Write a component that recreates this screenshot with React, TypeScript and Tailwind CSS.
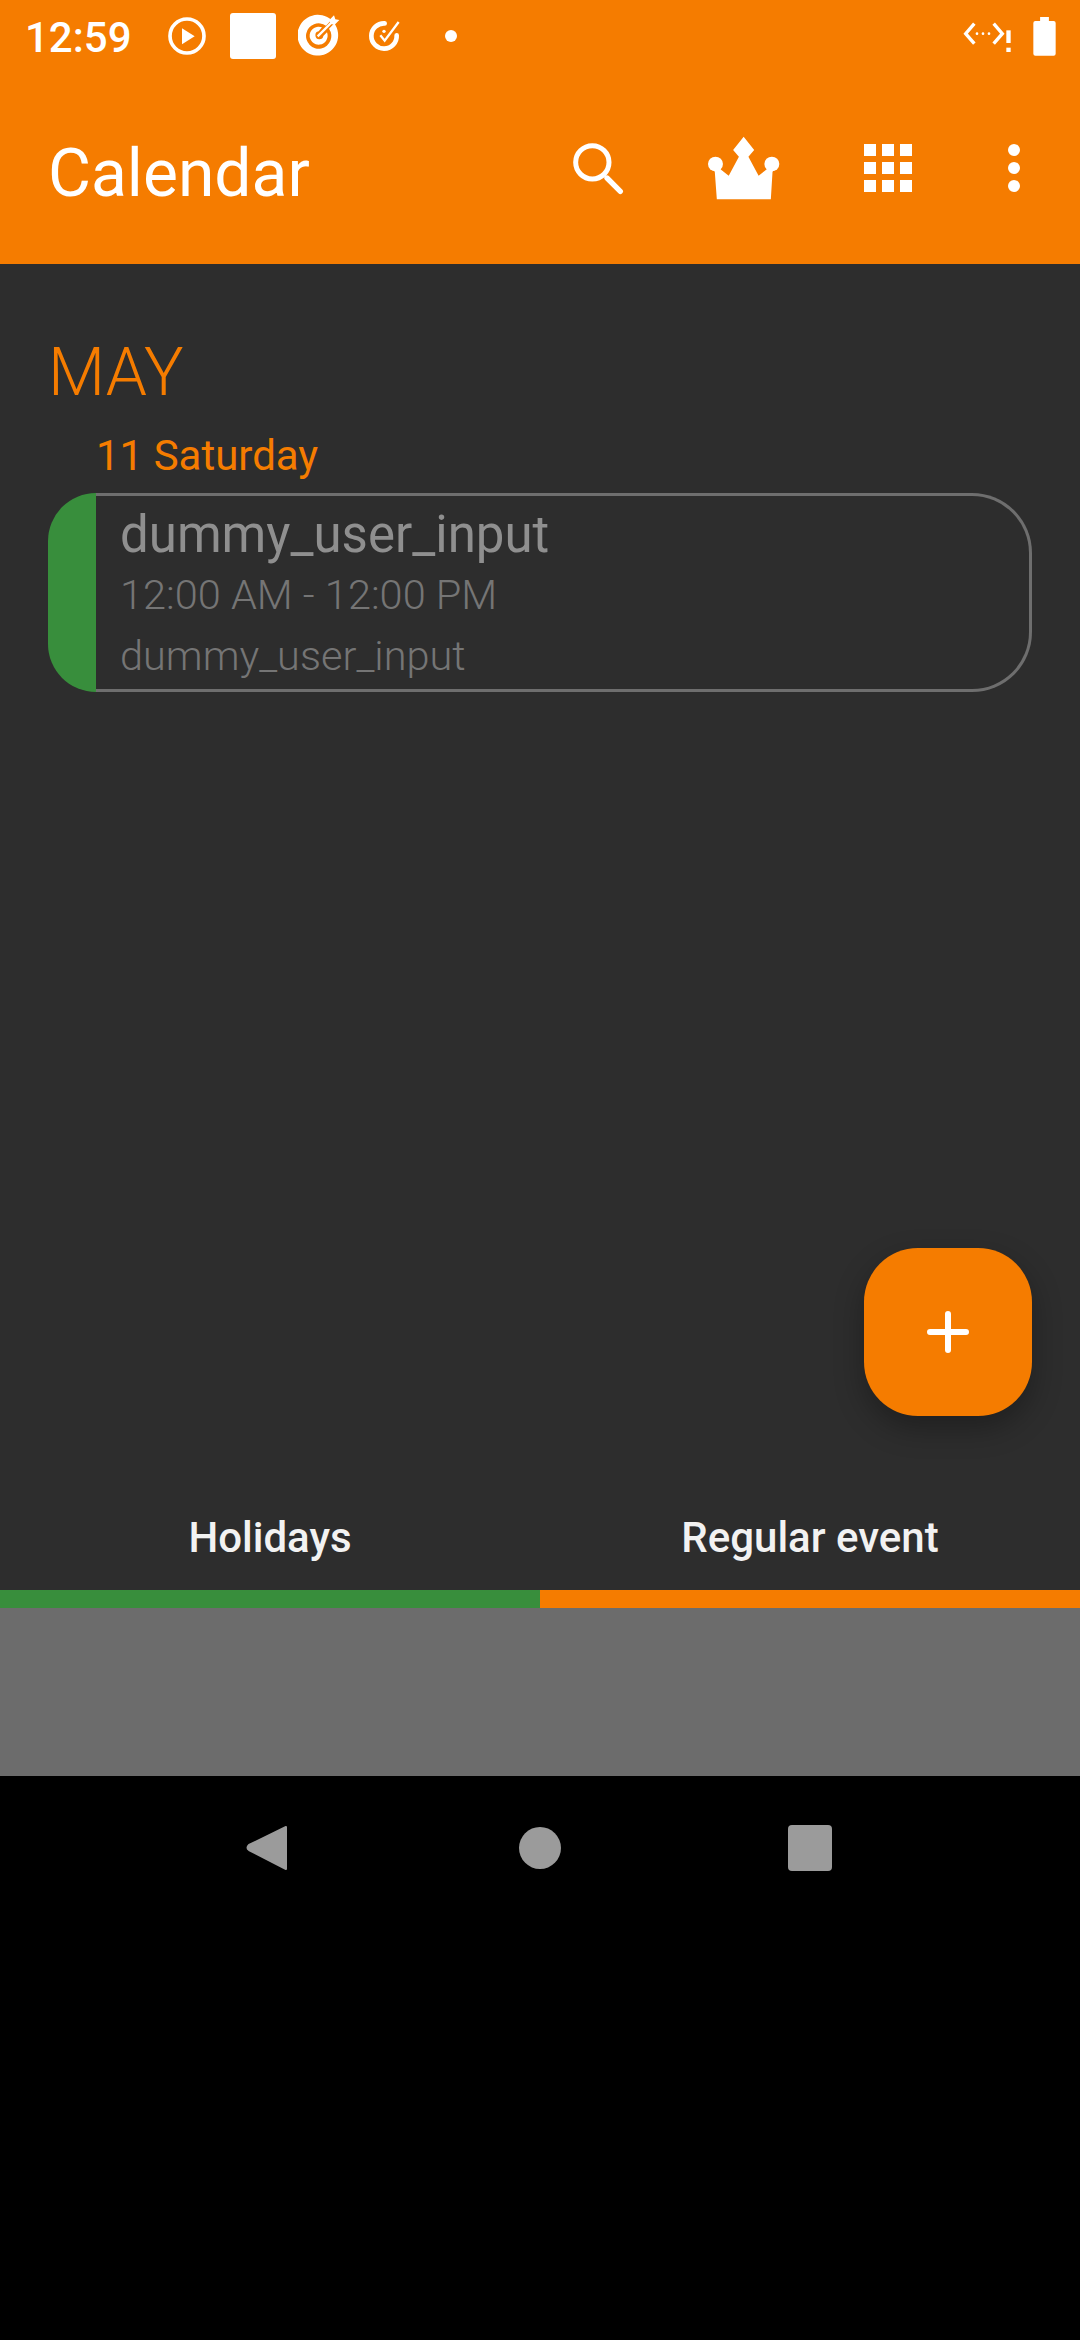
const ROBOTO = "font-['Roboto',sans-serif]";

// icon coordinates were read off a zoomed crop, hence preserveAspectRatio="none"
const StatusLeftIcons = () => (
  <div className="flex items-center">
    <svg className="ml-[36px]" width="38" height="38" viewBox="480 50 114 114" preserveAspectRatio="none">
      <circle cx="537" cy="107" r="51" fill="none" stroke="#fff" strokeWidth="11" />
      <path d="M522 84 L560 108 L522 132 Z" fill="#fff" />
    </svg>
    <div className="ml-[24px] h-[46px] w-[46px] rounded-[3px] bg-white" />
    <svg className="ml-[22px]" width="42" height="44" viewBox="858 44 126 132">
      <path d="M958 62 A61 61 0 1 0 967 72 L951 88 A38 38 0 1 1 942 79 Z" fill="#fff" />
      <path d="M930 84 A27 27 0 1 0 945 99 L934 110 A12 12 0 1 1 920 96 Z" fill="#fff" />
      <path d="M917 111 L966 62" stroke="#fff" strokeWidth="7" />
      <path d="M952 62 L966 48 L970 60 L982 62 L968 76 L956 74 Z" fill="#fff" />
    </svg>
    <svg className="ml-[28px]" width="34" height="36" viewBox="1060 56 102 108">
      <path d="M1110 72 A38 38 0 1 0 1146 108" fill="none" stroke="#fff" strokeWidth="14" strokeLinecap="round" />
      <path d="M1097 108 L1110 124 L1152 68" fill="none" stroke="#fff" strokeWidth="7" />
      <circle cx="1108" cy="96" r="5" fill="#fff" />
    </svg>
    <div className="ml-[43px] h-[12px] w-[12px] rounded-full bg-white" />
  </div>
);

const StatusRightIcons = () => (
  <div className="flex items-center">
    <svg width="50" height="34" viewBox="1228 66 150 102" preserveAspectRatio="none">
      <path d="M1262 80 L1236 110 L1262 140 M1320 80 L1346 110 L1320 140" fill="none" stroke="#fff" strokeWidth="10" />
      <circle cx="1270" cy="110" r="4" fill="#fff" />
      <circle cx="1288" cy="110" r="4" fill="#fff" />
      <circle cx="1306" cy="110" r="4" fill="#fff" />
      <rect x="1358" y="100" width="13" height="38" fill="#fff" />
      <rect x="1358" y="152" width="13" height="13" fill="#fff" />
    </svg>
    <svg className="ml-[20px]" width="23" height="39" viewBox="1431 48 68 117" preserveAspectRatio="none">
      <path d="M1452 48 H1478 V60 H1492 Q1498 60 1498 66 V158 Q1498 164 1492 164 H1438 Q1432 164 1432 158 V66 Q1432 60 1438 60 H1452 Z" fill="#fff" />
    </svg>
  </div>
);

const ToolbarIcons = () => (
  <div className="flex items-center">
    <svg width="51" height="53" viewBox="95 420 153 159" preserveAspectRatio="none">
      <circle cx="153" cy="481" r="50" fill="none" stroke="#fff" strokeWidth="15" />
      <path d="M197 528 L237 568" stroke="#fff" strokeWidth="16" strokeLinecap="round" />
    </svg>
    <svg className="ml-[84px]" width="72" height="64" viewBox="487 408 212 192" preserveAspectRatio="none">
      <path d="M592 410 L623 450 L606 470 L636 527 L664 505 L686 505 L677 515 L672 598 H513 L507 515 L498 505 L520 505 L548 527 L578 470 L561 450 Z" fill="#fff" />
      <circle cx="509" cy="492" r="22" fill="#fff" />
      <circle cx="675" cy="492" r="22" fill="#fff" />
    </svg>
    <div className="ml-[84px] grid grid-cols-3 gap-x-[6px] gap-y-[6px]">
      {Array.from({ length: 9 }).map((_, i) => (
        <div key={i} className="h-[12px] w-[12px] bg-white" />
      ))}
    </div>
    <div className="ml-[96px] flex flex-col gap-[6px]">
      {[0, 1, 2].map((i) => (
        <div key={i} className="h-[12px] w-[12px] rounded-full bg-white" />
      ))}
    </div>
  </div>
);

const App = () => (
  <div className={`flex h-[2340px] w-[1080px] flex-col bg-black ${ROBOTO}`}>
    <header className="h-[264px] bg-[#f57c00] text-white">
      <div className="flex h-[72px] items-center justify-between pl-[25px] pr-[24px]">
        <div className="flex items-center">
          <span className="pt-[4px] text-[42px] font-medium leading-none">12:59</span>
          <StatusLeftIcons />
        </div>
        <StatusRightIcons />
      </div>
      <div className="flex h-[192px] items-center justify-between pl-[48px] pr-[60px]">
        <h1 className="pt-[12px] text-[66px] font-normal leading-none">Calendar</h1>
        <ToolbarIcons />
      </div>
    </header>

    <main className="relative flex h-[1512px] flex-col bg-[#2d2d2d]">
      <div className="flex-1 px-[48px] pt-[76px]">
        <div className="text-[66px] font-light leading-none text-[#f57c00]">MAY</div>
        <div className="ml-[48px] mt-[25px] text-[42px] leading-[50px] text-[#f57c00]">11 Saturday</div>
        <div className="mt-[12px] flex h-[199px]">
          <div className="w-[48px] shrink-0 rounded-l-[60px] bg-[#388e3c]" />
          <div className="flex flex-1 flex-col rounded-r-[60px] border-y-[3px] border-r-[3px] border-[#6e6e6e] pl-[24px] pt-[11px]">
            <div className="text-[51px] leading-[56px] text-[#8f8f8f]">dummy_user_input</div>
            <div className="mt-[7px] text-[41.5px] font-light leading-[50px] text-[#757575]">12:00 AM - 12:00 PM</div>
            <div className="mt-[11px] text-[41.5px] font-light leading-[50px] text-[#757575]">dummy_user_input</div>
          </div>
        </div>
      </div>

      <button className="absolute bottom-[360px] right-[48px] flex h-[168px] w-[168px] items-center justify-center rounded-[54px] bg-[#f57c00] shadow-[0_12px_30px_rgba(0,0,0,0.3)]">
        <svg width="42" height="42" viewBox="0 0 42 42">
          <path d="M3 21 H39 M21 3 V39" stroke="#fff" strokeWidth="6" strokeLinecap="round" />
        </svg>
      </button>

      <div className="grid h-[106px] grid-cols-2 items-center text-center text-[42px] font-medium text-[#f2f2f2]">
        <div>Holidays</div>
        <div>Regular event</div>
      </div>
      <div className="grid h-[18px] grid-cols-2">
        <div className="bg-[#388e3c]" />
        <div className="bg-[#f57c00]" />
      </div>
      <div className="h-[168px] bg-[#6c6c6c]" />
    </main>

    <nav className="flex h-[144px] items-center justify-center pr-[2px]">
      <svg width="44" height="48" viewBox="0 0 44 48">
        <path d="M40 3 V45 L3 26 Q0 24 3 21 Z" fill="#9b9b9b" stroke="#9b9b9b" strokeWidth="2" strokeLinejoin="round" />
      </svg>
      <div className="ml-[229px] h-[42px] w-[42px] rounded-full bg-[#9b9b9b]" />
      <div className="ml-[227px] h-[46px] w-[44px] rounded-[4px] bg-[#9b9b9b]" />
    </nav>
  </div>
);

export default App;
